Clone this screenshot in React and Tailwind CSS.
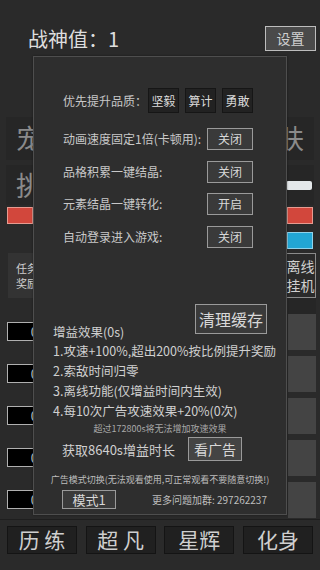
import React from 'react';

const font = { fontFamily: '"Noto Sans CJK SC", "Noto Sans", sans-serif' };

const SettingRow = ({ label, value }) => (
  <div className="flex h-[22px] items-center justify-between">
    <span className="text-[12px] text-[#c8c8c8]">{label}</span>
    <span className="flex h-[22px] w-[46px] items-center justify-center border border-[#9a9a9a] bg-[#3a3a3a] text-[12px] text-[#d8d8d8]">
      {value}
    </span>
  </div>
);

const QualityBtn = ({ children }) => (
  <span className="flex h-[25px] w-[31px] items-center justify-center border border-[#161616] bg-[#222] text-[12px] text-[#dcdcdc]">
    {children}
  </span>
);

const App = () => {
  const zeroRows = [0, 1, 2, 3, 4];
  const rightBlocks = [0, 1, 2, 3, 4];

  return (
    <div className="relative h-[570px] w-[320px] overflow-hidden bg-[#2a2a2a]" style={font}>
      {/* Header */}
      <div className="flex h-[56px] items-start justify-between pl-[28px] pr-[4px] pt-[26px]">
        <span className="text-[20px] leading-[26px] text-[#dedede]">战神值：1</span>
        <span className="flex h-[25px] w-[51px] items-center justify-center border border-[#bdbdbd] bg-[#4a4a4a] text-[14px] text-[#d0d0d0]">
          设置
        </span>
      </div>

      {/* Background content */}
      <div className="flex flex-col pt-[61px]">
        <div className="mx-[6px] flex h-[43px] items-center justify-between bg-[#262626] px-[10px]">
          <span className="text-[27px] text-[#8a8a8a]">宠</span>
          <span className="text-[27px] text-[#8a8a8a]">肤</span>
        </div>
        <div className="mx-[6px] mt-[5px] flex h-[40px] items-center justify-between bg-[#262626] pl-[10px]">
          <span className="text-[27px] text-[#8a8a8a]">挑</span>
          <span className="mr-[2px] h-[9px] w-[26px] rounded-[2px] bg-[#e4e8ea]" />
        </div>
        <div className="mt-[2px] flex h-[17px] justify-between px-[7px]">
          <span className="w-[26px] border border-[#e69a90] bg-[#d2473c]" />
          <span className="w-[26px] border border-[#e69a90] bg-[#d2473c]" />
        </div>
        <div className="mt-[8px] flex h-[17px] justify-end px-[7px]">
          <span className="w-[26px] border border-[#8fd2ea] bg-[#22a6d4]" />
        </div>
        <div className="mt-[4px] flex h-[45px] justify-between pl-[8px] pr-[4px]">
          <div className="flex w-[40px] flex-col justify-center bg-[#333] pl-[8px] text-[11px] leading-[15px] text-[#cfcfcf]">
            <span>任务</span>
            <span>奖励</span>
          </div>
          <div className="flex w-[31px] flex-col items-center justify-center border border-[#8a8a8a] text-[14px] leading-[19px] text-[#cfcfcf]">
            <span>离线</span>
            <span>挂机</span>
          </div>
        </div>
        <div className="flex justify-between pl-[7px] pr-[4px]">
          <div className="flex flex-col gap-[23px] pt-[24px]">
            {zeroRows.map(i => (
              <span key={i} className="flex h-[19px] w-[40px] items-center justify-end border border-[#b0b0b0] bg-black pr-[8px] text-[13px] text-[#cfcfcf]">
                0
              </span>
            ))}
          </div>
          <div className="flex w-[28px] flex-col">
            <span className="h-[16px] bg-[#262626]" />
            <div className="flex flex-col gap-[6px]">
              {rightBlocks.map(i => (
                <span key={i} className="h-[36px] bg-[#444]" />
              ))}
            </div>
          </div>
        </div>
      </div>

      {/* Bottom nav */}
      <div className="absolute bottom-0 left-0 right-0 h-[51px] border-t border-[#1e1e1e] bg-[#2a2a2a]">
        <div className="flex justify-between px-[7px] pt-[6px]">
          {['历 练', '超 凡', '星辉', '化身'].map(t => (
            <span key={t} className="flex h-[28px] w-[70px] items-center justify-center border border-[#141414] bg-[#202020] text-[21px] text-[#cfcfcf]">
              {t}
            </span>
          ))}
        </div>
      </div>

      {/* Settings modal */}
      <div className="absolute left-[33px] top-[56px] flex h-[459px] w-[254px] flex-col border border-[#4e4e4e] bg-[#2e2e2e] shadow-[0_0_2px_rgba(0,0,0,0.4)]">
        <div className="ml-[29px] mt-[31px] flex items-center">
          <span className="text-[12px] text-[#c8c8c8]">优先提升品质：</span>
          <div className="ml-[1px] flex gap-[6px]">
            <QualityBtn>坚毅</QualityBtn>
            <QualityBtn>算计</QualityBtn>
            <QualityBtn>勇敢</QualityBtn>
          </div>
        </div>

        <div className="ml-[29px] mr-[33px] mt-[15px] flex flex-col gap-[10.5px]">
          <SettingRow label="动画速度固定1倍(卡顿用):" value="关闭" />
          <SettingRow label="品格积累一键结晶:" value="关闭" />
          <SettingRow label="元素结晶一键转化:" value="开启" />
          <SettingRow label="自动登录进入游戏:" value="关闭" />
        </div>

        <div className="mr-[19px] mt-[56px] flex justify-end">
          <span className="flex h-[30px] w-[72px] items-center justify-center border border-[#9a9a9a] bg-[#3a3a3a] text-[16px] text-[#d8d8d8]">
            清理缓存
          </span>
        </div>

        <div className="-mt-[12px] ml-[19px] flex flex-col text-[12.5px] leading-[19.75px] text-[#d0d0d0]">
          <span>增益效果(0s)</span>
          <span>1.攻速+100%,超出200%按比例提升奖励</span>
          <span>2.索敌时间归零</span>
          <span>3.离线功能(仅增益时间内生效)</span>
          <span>4.每10次广告攻速效果+20%(0次)</span>
        </div>
        <div className="mt-[3px] text-center text-[9px] leading-[12px] text-[#a8a8a8]">
          超过172800s将无法增加攻速效果
        </div>

        <div className="ml-[28px] mt-[2px] flex items-center">
          <span className="text-[13px] text-[#d0d0d0]">获取8640s增益时长</span>
          <span className="ml-[13px] flex h-[24px] w-[54px] items-center justify-center border border-[#9a9a9a] bg-[#444] text-[14px] text-[#d8d8d8]">
            看广告
          </span>
        </div>

        <div className="mt-[13px] text-center text-[9px] leading-[12px] text-[#bdbdbd]">
          广告模式切换(无法观看使用,可正常观看不要随意切换!)
        </div>
        <div className="ml-[28px] mt-[4px] flex items-center">
          <span className="flex h-[19px] w-[54px] items-center justify-center border border-[#9a9a9a] bg-[#3a3a3a] text-[13px] text-[#d8d8d8]">
            模式1
          </span>
          <span className="ml-[36px] text-[10px] text-[#bdbdbd]">更多问题加群: 297262237</span>
        </div>
      </div>
    </div>
  );
};

export default App;
